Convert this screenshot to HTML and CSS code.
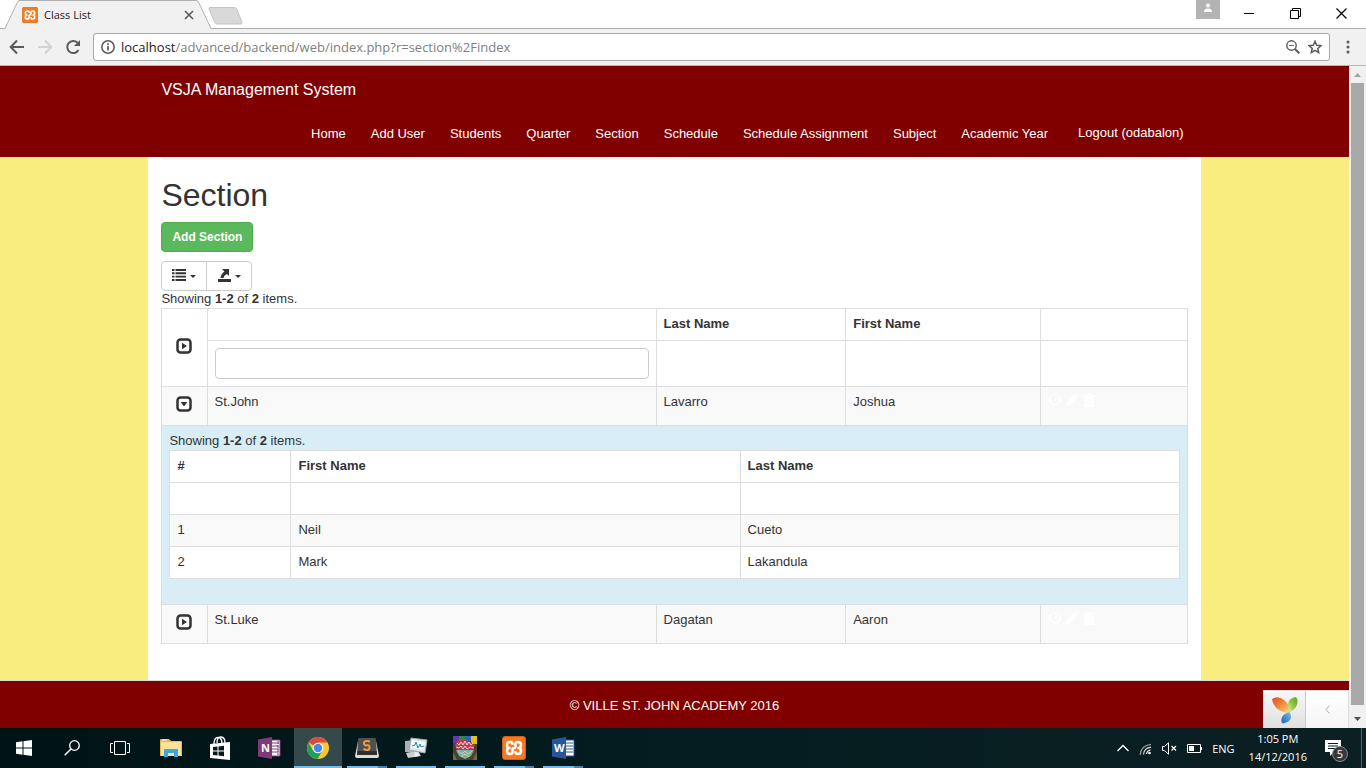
FILE: index.html
```html
<!DOCTYPE html>
<html lang="en">
<head>
<meta charset="utf-8">
<title>Class List</title>
<link rel="stylesheet" href="styles.css">
</head>
<body>
<svg class="defs" width="0" height="0" aria-hidden="true">
  <defs>
    <symbol id="xampp" viewBox="0 0 24 24">
      <rect x="0.500" y="0.500" width="23" height="23" rx="2.500" fill="#f57a20" stroke="#d2601a"/>
      <path d="M10.500 9V8Q10.500 6 8 6Q5 6 5 9Q5 12 7.500 12Q5 12 5 15Q5 18 8 18Q10.500 18 10.500 16V14Q10.500 12 12 12Q13.500 12 13.500 10V8Q13.500 6 16 6Q19 6 19 9Q19 12 16.500 12Q19 12 19 15Q19 18 16 18Q13.500 18 13.500 16V15" fill="none" stroke="#fff" stroke-width="2.500" stroke-linejoin="round"/>
    </symbol>
    <symbol id="expand" viewBox="0 0 16 16">
      <rect x="1.500" y="1.500" width="13" height="13" rx="3" fill="#fff" stroke="#333" stroke-width="2.500"/>
      <path d="M6 4.800L11 8L6 11.200Z" fill="#333"/>
    </symbol>
    <symbol id="collapse" viewBox="0 0 16 16">
      <rect x="1.500" y="1.500" width="13" height="13" rx="3" fill="#fff" stroke="#333" stroke-width="2.500"/>
      <path d="M4.600 6H11.400L8 10.500Z" fill="#333"/>
    </symbol>
    <symbol id="eye" viewBox="0 0 14 14">
      <path d="M0 7Q3 1.500 7 1.500T14 7Q11 12.500 7 12.500T0 7Z" fill="#fff"/>
      <circle cx="7" cy="6.500" r="3.300" fill="none" stroke="#f3f3f3"/>
      <path d="M5 6.500Q5 4.500 7 4.500" fill="none" stroke="#f3f3f3"/>
    </symbol>
    <symbol id="pencil" viewBox="0 0 14 14">
      <path d="M0.500 13.500L1.500 9.500L4.500 12.500ZM2 9L9 2L12 5L5 12ZM9.800 1.400L11.200 0L14 2.800L12.600 4.200Z" fill="#fff"/>
    </symbol>
    <symbol id="trash" viewBox="0 0 14 14">
      <path fill-rule="evenodd" d="M0.500 2H4.500V0.500H9.500V2H13.500V3.500H0.500ZM2 4H12V14H2ZM4.300 6V12H4.900V6ZM6.700 6V12H7.300V6ZM9.100 6V12H9.700V6Z" fill="#fff"/>
    </symbol>
  </defs>
</svg>

<header class="browser">
  <div class="titlebar">
    <div class="tab">
      <svg class="tab-shape" width="212" height="29" viewBox="0 0 212 29"><path d="M0 28.500H5L17.500 2Q18 0.500 20 0.500H196Q198 0.500 198.500 2L211 28.500H212V29H0Z" fill="#f1f1f1"/><path d="M0 28.500H5L17.500 2Q18 0.500 20 0.500H196Q198 0.500 198.500 2L211 28.500H212" fill="none" stroke="#b0b0b0"/></svg>
      <svg width="16" height="16"><use href="#xampp"/></svg>
      <span class="tab-title">Class List</span>
      <button class="icon-btn tab-close" aria-label="Close tab"><svg width="10" height="10" viewBox="0 0 10 10"><path d="M1 1L9 9M9 1L1 9" stroke="#5a5a5a" stroke-width="1.600"/></svg></button>
    </div>
    <button class="icon-btn new-tab" aria-label="New tab"><svg width="36" height="18" viewBox="0 0 36 18"><path d="M2 0.500H26Q28 0.500 29 2.500L34 15.500Q34.500 17 33 17H9Q7.500 17 6.500 15L1 2Q0.500 0.500 2 0.500Z" fill="#d9d9d9" stroke="#c4c4c4"/></svg></button>
    <div class="window-controls">
      <button class="icon-btn profile" aria-label="Profile"><svg width="10" height="10" viewBox="0 0 10 10"><circle cx="5" cy="2.500" r="2" fill="#fff"/><path d="M1 9V7.500Q2 5.500 5 5.500T9 7.500V9Z" fill="#fff"/></svg></button>
      <button class="icon-btn win" aria-label="Minimize"><svg width="10" height="10"><path d="M0 4.500H10" stroke="#000"/></svg></button>
      <button class="icon-btn win" aria-label="Restore"><svg width="11" height="11" viewBox="0 0 11 11"><path d="M0.500 2.500H8.500V10.500H0.500ZM2.500 2.500V0.500H10.500V8.500H8.500" fill="none" stroke="#000"/></svg></button>
      <button class="icon-btn win" aria-label="Close"><svg width="11" height="11" viewBox="0 0 11 11"><path d="M0.500 0.500L10.500 10.500M10.500 0.500L0.500 10.500" stroke="#000" stroke-width="1.200"/></svg></button>
    </div>
  </div>
  <div class="toolbar">
    <button class="icon-btn" aria-label="Back"><svg width="16" height="16" viewBox="0 0 16 16"><path d="M15 8H2.500M8 1.500L1.700 8L8 14.500" fill="none" stroke="#5a5a5a" stroke-width="2"/></svg></button>
    <button class="icon-btn" aria-label="Forward"><svg width="16" height="16" viewBox="0 0 16 16"><path d="M1 8H13.500M8 1.500L14.300 8L8 14.500" fill="none" stroke="#d2d2d2" stroke-width="2"/></svg></button>
    <button class="icon-btn" aria-label="Reload"><svg width="16" height="16" viewBox="0 0 16 16"><path d="M13.500 11A6 6 0 1 1 12.500 3.800" fill="none" stroke="#5a5a5a" stroke-width="2"/><path d="M15 1V7H9Z" fill="#5a5a5a"/></svg></button>
    <div class="address">
      <svg width="14" height="14" viewBox="0 0 14 14"><circle cx="7" cy="7" r="6.200" fill="none" stroke="#5a5a5a" stroke-width="1.500"/><path d="M7 6V10.500M7 3.300V5" stroke="#5a5a5a" stroke-width="1.700"/></svg>
      <span class="url"><b>localhost</b>/advanced/backend/web/index.php?r=section%2Findex</span>
      <button class="icon-btn zoom" aria-label="Zoom"><svg width="14" height="14" viewBox="0 0 14 14"><circle cx="5.500" cy="5.500" r="4.700" fill="none" stroke="#5a5a5a" stroke-width="1.400"/><path d="M3 5.500H8" stroke="#777" stroke-width="1.200"/><path d="M9 9L13.300 13.300" stroke="#5a5a5a" stroke-width="2"/></svg></button>
      <button class="icon-btn" aria-label="Bookmark"><svg width="14" height="14" viewBox="0 0 14 14"><path d="M7 1.300L8.700 5.200L13 5.600L9.800 8.400L10.700 12.600L7 10.400L3.300 12.600L4.200 8.400L1 5.600L5.300 5.200Z" fill="none" stroke="#5a5a5a" stroke-width="1.500"/></svg></button>
    </div>
    <button class="icon-btn menu" aria-label="Menu"><svg width="4" height="14" viewBox="0 0 4 14"><circle cx="2" cy="2" r="1.500" fill="#5a5a5a"/><circle cx="2" cy="7" r="1.500" fill="#5a5a5a"/><circle cx="2" cy="12" r="1.500" fill="#5a5a5a"/></svg></button>
  </div>
</header>

<div class="viewport">
  <div class="page">
    <nav class="navbar">
      <div class="navbar-inner">
        <a class="brand" href="#">VSJA Management System</a>
        <div class="nav-links">
          <a href="#">Home</a><a href="#">Add User</a><a href="#">Students</a><a href="#">Quarter</a><a href="#">Section</a><a href="#">Schedule</a><a href="#">Schedule Assignment</a><a href="#">Subject</a><a href="#">Academic Year</a>
          <button class="logout">Logout (odabalon)</button>
        </div>
      </div>
    </nav>
    <main class="container">
      <div class="breadcrumb"></div>
      <h1>Section</h1>
      <button class="btn-add">Add Section</button>
      <div class="btn-group">
        <button aria-label="Columns"><svg width="14" height="12" viewBox="0 0 14 12"><path d="M0 1H2.500M3.500 1H14M0 4.300H2.500M3.500 4.300H14M0 7.600H2.500M3.500 7.600H14M0 11H2.500M3.500 11H14" stroke="#333" stroke-width="1.900"/></svg><span class="caret"></span></button>
        <button aria-label="Export"><svg width="13" height="13" viewBox="0 0 13 13"><path d="M0 10H13V13H0ZM4 0H11V7L9 5Q6 6 5.500 9H2.500Q3 4.500 6.500 2.500Z" fill="#333"/></svg><span class="caret"></span></button>
      </div>
      <p class="summary">Showing <b>1-2</b> of <b>2</b> items.</p>
      <table class="grid sections">
        <colgroup><col class="c-toggle"><col class="c-name"><col class="c-last"><col class="c-first"><col class="c-actions"></colgroup>
        <thead>
          <tr><th class="toggle" rowspan="2"><button class="icon-btn" aria-label="Expand all"><svg width="16" height="16"><use href="#expand"/></svg></button></th><th></th><th>Last Name</th><th>First Name</th><th></th></tr>
          <tr class="filters"><td><input type="text" aria-label="Filter sections"></td><td></td><td></td><td></td></tr>
        </thead>
        <tbody>
          <tr class="row"><td class="toggle"><button class="icon-btn" aria-label="Collapse"><svg width="16" height="16"><use href="#collapse"/></svg></button></td><td>St.John</td><td>Lavarro</td><td>Joshua</td><td><div class="actions"><a href="#" aria-label="View"><svg width="14" height="14"><use href="#eye"/></svg></a><a href="#" aria-label="Update"><svg width="14" height="14"><use href="#pencil"/></svg></a><a href="#" aria-label="Delete"><svg width="14" height="14"><use href="#trash"/></svg></a></div></td></tr>
          <tr class="detail"><td colspan="5">
            <p class="summary">Showing <b>1-2</b> of <b>2</b> items.</p>
            <table class="grid students">
              <colgroup><col class="s-num"><col class="s-first"><col class="s-last"></colgroup>
              <thead>
                <tr><th>#</th><th>First Name</th><th>Last Name</th></tr>
                <tr><td>&nbsp;</td><td></td><td></td></tr>
              </thead>
              <tbody>
                <tr class="row-odd"><td>1</td><td>Neil</td><td>Cueto</td></tr>
                <tr><td>2</td><td>Mark</td><td>Lakandula</td></tr>
              </tbody>
            </table>
          </td></tr>
          <tr class="row"><td class="toggle"><button class="icon-btn" aria-label="Expand"><svg width="16" height="16"><use href="#expand"/></svg></button></td><td>St.Luke</td><td>Dagatan</td><td>Aaron</td><td><div class="actions"><a href="#" aria-label="View"><svg width="14" height="14"><use href="#eye"/></svg></a><a href="#" aria-label="Update"><svg width="14" height="14"><use href="#pencil"/></svg></a><a href="#" aria-label="Delete"><svg width="14" height="14"><use href="#trash"/></svg></a></div></td></tr>
        </tbody>
      </table>
    </main>
    <footer class="footer">© VILLE ST. JOHN ACADEMY 2016</footer>
    <div class="debug-bar">
      <a href="#" class="debug-logo" aria-label="Yii debugger"><svg width="28" height="30" viewBox="0 0 28 30">
        <defs>
          <linearGradient id="yo" x1="0" y1="0" x2="1" y2="1"><stop offset="0" stop-color="#dc4a2c"/><stop offset="0.500" stop-color="#f08c3c"/><stop offset="1" stop-color="#fde08a"/></linearGradient>
          <linearGradient id="yg" x1="1" y1="0" x2="0" y2="1"><stop offset="0" stop-color="#5ea32d"/><stop offset="0.500" stop-color="#8cc63f"/><stop offset="1" stop-color="#e8f0a0"/></linearGradient>
          <linearGradient id="yb" x1="1" y1="0" x2="0" y2="1"><stop offset="0" stop-color="#7fc4ea"/><stop offset="1" stop-color="#1d5fae"/></linearGradient>
        </defs>
        <path d="M1 4Q7 0 13 5Q19 10 20 17Q14 19 8 15Q2 11 1 4Z" fill="url(#yo)"/>
        <path d="M24 2Q17 4 17 9Q17 13 19 17Q27 13 26.500 6Q26 2 24 2Z" fill="url(#yg)"/>
        <path d="M18.500 17Q11 19 10.500 24Q10 28 12 28.500Q19 27 20 23Q20.500 20 18.500 17Z" fill="url(#yb)"/>
      </svg></a>
      <button class="debug-toggle" aria-label="Open debugger"><svg width="5" height="9" viewBox="0 0 5 9"><path d="M4.500 0.500L1 4.500L4.500 8.500" fill="none" stroke="#aaa"/></svg></button>
    </div>
  </div>
  <div class="scrollbar">
    <svg width="17" height="17" viewBox="0 0 17 17"><path d="M5 11L8.500 7L12 11Z" fill="#a3a3a3"/></svg>
    <div class="thumb"></div>
    <svg width="17" height="17" viewBox="0 0 17 17"><path d="M5 6L8.500 10L12 6Z" fill="#505050"/></svg>
  </div>
</div>

<div class="taskbar">
  <div class="launchers">
    <button class="sys" aria-label="Start"><svg width="16" height="16" viewBox="0 0 16 16"><path d="M0 2.200L6.500 1.300V7.500H0ZM7.500 1.200L16 0V7.500H7.500ZM0 8.500H6.500V14.700L0 13.800ZM7.500 8.500H16V16L7.500 14.800Z" fill="#fff"/></svg></button>
    <button class="sys" aria-label="Search"><svg width="16" height="16" viewBox="0 0 16 16"><circle cx="10.500" cy="5.500" r="4.800" fill="none" stroke="#fff" stroke-width="1.300"/><path d="M7 9L0.700 15.300" stroke="#fff" stroke-width="1.500"/></svg></button>
    <button class="sys" aria-label="Task view"><svg width="20" height="14" viewBox="0 0 20 14"><path d="M4.500 0.500H15.500V13.500H4.500ZM3 2.500H0.500V11.500H3M17 2.500H19.500V11.500H17" fill="none" stroke="#fff"/></svg></button>
    <button class="app" aria-label="File Explorer"><svg width="22" height="18" viewBox="0 0 22 18"><path d="M0 1Q0 0 1 0H9L11 2H21Q22 2 22 3V17H0Z" fill="#e9b949"/><path d="M1 3H21V17H1Z" fill="#fbe29a"/><path d="M4 18V11Q4 10 5 10H17Q18 10 18 11V18H14V14H8V18Z" fill="#3ba6e0"/><path d="M2 1H7" stroke="#fff"/></svg></button>
    <button class="app" aria-label="Store"><svg width="22" height="24" viewBox="0 0 22 24"><path d="M1 8L21 6V24L1 22Z" fill="#fff"/><path d="M5 8Q5 1.500 9 1.500T13 8M8 7Q8 0.800 12 1T16 7" fill="none" stroke="#fff" stroke-width="1.300"/><path d="M4 11L8.500 10.500V14.500H4ZM9.500 10.400L15 9.700V14.500H9.500ZM4 15.500H8.500V19.500L4 19ZM9.500 15.500H15V20.200L9.500 19.600Z" fill="#071a1e"/></svg></button>
    <button class="app" aria-label="OneNote"><svg width="23" height="22" viewBox="0 0 23 22"><path d="M11 3H22V19H11Z" fill="#fff" stroke="#80397b"/><path d="M14 6H21M14 9H21M14 12H21M14 15H21" stroke="#80397b"/><path d="M20 4V18" stroke="#80397b" stroke-dasharray="3 1"/><path d="M0 2.500L14 0V22L0 19.500Z" fill="#80397b"/><text x="3" y="15" class="office">N</text></svg></button>
    <button class="app active" aria-label="Chrome"><svg width="22" height="22" viewBox="0 0 22 22"><circle cx="11" cy="11" r="11" fill="#f8c932"/><path d="M11 11L1.500 5.500A11 11 0 0 1 20.500 5.500H11Z" fill="#dd4b3e"/><path d="M1.500 5.500A11 11 0 0 0 10.500 22L15.500 13.500L6 13.500Z" fill="#1fa15d"/><circle cx="11" cy="11" r="5.300" fill="#fff"/><circle cx="11" cy="11" r="4.200" fill="#4a85ee"/></svg></button>
    <button class="app running stacked" aria-label="Sublime Text"><svg width="24" height="22" viewBox="0 0 24 22"><path d="M3 4H21L24 19Q24 21 22 21H2Q0 21 0 19Z" fill="#ddd"/><path d="M4 1H20Q21 1 21 3L22 18H2L3 3Q3 1 4 1Z" fill="#505050"/><path d="M2.500 14H21.700L22 18H2Z" fill="#303030"/><path d="M15 4.500Q9 3 9 6T12 8.300T14.500 11T8.500 12" fill="none" stroke="#f59b3c" stroke-width="2"/></svg></button>
    <button class="app running" aria-label="Task monitor"><svg width="24" height="22" viewBox="0 0 24 22"><path d="M1 4L11 3V16L1 15Z" fill="#a9b3b5"/><path d="M2 16L14 14L17 19L4 21Z" fill="#c9d0d1"/><path d="M7 1L23 3L21 16L5 13Z" fill="#dfe5e6" stroke="#9da9ab"/><path d="M8 3L21 5L19.500 13L7 11Z" fill="#f5fbfd"/><path d="M8 9L11 8L12 5L14 11L16 7L17 10L20 9" fill="none" stroke="#2488b8"/><path d="M11 15L15 16V19L10 20Z" fill="#eee"/></svg></button>
    <button class="app running" aria-label="Game"><svg width="24" height="24" viewBox="0 0 24 24"><path d="M0 0H24V24H0Z" fill="#4c4030"/><path d="M0 0H6V7H0Z" fill="#6635b5"/><path d="M6 0H12V6H6Z" fill="#308c3d"/><path d="M12 0H18V5H12Z" fill="#315fd0"/><path d="M18 0H24V8H18Z" fill="#e0c315"/><path d="M2 9Q5 2 12 4T22 9L20 14H4Z" fill="#c33b4e"/><path d="M4 7L6 9L8 6L10 9L12 5L14 9L16 6L18 9L20 7M3 11L6 12L8 10L10 13L12 10L14 13L17 11L21 12" fill="none" stroke="#e8d8c5"/><path d="M3 14H21L18 20L12 23L6 20Z" fill="#7aaeb0"/><path d="M5 15L9 18L12 15L15 18L19 15M8 21L12 18L16 21" fill="none" stroke="#e3d27c"/><path d="M0 16L4 24H0ZM24 16L20 24H24Z" fill="#7b6740"/></svg></button>
    <button class="app running stacked" aria-label="XAMPP"><svg width="24" height="24"><use href="#xampp"/></svg></button>
    <button class="app running stacked" aria-label="Word"><svg width="23" height="22" viewBox="0 0 23 22"><path d="M11 3H22V19H11Z" fill="#fff" stroke="#2a5699"/><path d="M14 6H21M14 9H21M14 12H21M14 15H21" stroke="#2a5699"/><path d="M0 2.500L14 0V22L0 19.500Z" fill="#2a5699"/><text x="2" y="15" class="office">W</text></svg></button>
  </div>
  <div class="tray">
    <button class="icon-btn" aria-label="Show hidden icons"><svg width="12" height="8" viewBox="0 0 12 8"><path d="M0.500 7L6 1.500L11.500 7" fill="none" stroke="#fff" stroke-width="1.300"/></svg></button>
    <button class="icon-btn" aria-label="Network"><svg width="13" height="13" viewBox="0 0 13 13"><circle cx="10.500" cy="11" r="1.300" fill="#fff"/><path d="M7.500 12Q8 8.500 11.500 8" fill="none" stroke="#fff" stroke-width="1.200"/><path d="M4.500 12.500Q5 6 12 5.200" fill="none" stroke="#ddd" stroke-width="1.200"/><path d="M1.300 13Q1.500 3.500 12 2.300" fill="none" stroke="#999" stroke-width="1.200"/></svg></button>
    <button class="icon-btn" aria-label="Volume"><svg width="15" height="13" viewBox="0 0 15 13"><path d="M0.500 4.500H2.500L6.500 0.800V12.200L2.500 8.500H0.500Z" fill="none" stroke="#fff"/><path d="M9.500 4L14 8.500M14 4L9.500 8.500" stroke="#fff" stroke-width="1.200"/></svg></button>
    <button class="icon-btn" aria-label="Battery"><svg width="15" height="9" viewBox="0 0 15 9"><path d="M0.500 0.500H13.500V8.500H0.500Z" fill="none" stroke="#fff"/><path d="M2 2H7V7H2ZM13.500 3H15V6H13.500Z" fill="#fff"/></svg></button>
    <span class="lang">ENG</span>
    <span class="clock">1:05 PM<br>14/12/2016</span>
    <button class="icon-btn notices" aria-label="Notifications"><svg width="16" height="17" viewBox="0 0 16 17"><path d="M0 0H16V12H9L5 16V12H0Z" fill="#fff"/><path d="M3 3.500H13M3 6H13M3 8.500H13" stroke="#0b1f22"/></svg><span class="badge">5</span></button>
    <span class="peek"></span>
  </div>
</div>
</body>
</html>
```
FILE: styles.css
```css
* { box-sizing: border-box; }

body {
  margin: 0;
  height: 100vh;
  display: flex;
  flex-direction: column;
  overflow: hidden;
  font: 13px/17px "Liberation Sans", Arial, sans-serif;
  color: #333;
  background: #fff;
}

button { font: inherit; color: inherit; cursor: pointer; }
svg { display: block; flex: none; }
a { color: inherit; text-decoration: none; }
.defs { position: absolute; }

.icon-btn {
  display: flex;
  align-items: center;
  justify-content: center;
  padding: 0;
  border: 0;
  background: none;
}

/* Browser frame */
.browser { flex: none; font-family: "Open Sans", sans-serif; }
.titlebar {
  display: flex;
  height: 29px;
  border-bottom: 1px solid #b0b0b0;
}
.tab {
  position: relative;
  display: flex;
  align-items: center;
  gap: 6px;
  width: 208px;
  height: 29px;
  padding: 0 14px 0 22px;
}
.tab > * { position: relative; }
.tab .tab-shape { position: absolute; left: 0; top: 0; }
.tab-title { flex: 1; font-size: 11px; color: #222; }
.new-tab { height: 32px; }
.window-controls {
  display: flex;
  align-items: flex-start;
  margin-left: auto;
  padding-right: 2px;
}
.profile {
  width: 24px;
  height: 19px;
  margin-right: 6px;
  padding-bottom: 3px;
  background: #b3b3b3;
}
.win { width: 46px; height: 27px; }

.toolbar {
  display: flex;
  align-items: center;
  gap: 12px;
  height: 37px;
  padding: 0 16px 0 9px;
  background: #f1f1f1;
  border-bottom: 1px solid #b5b5b5;
}
.menu { margin-left: 4px; }
.address {
  flex: 1;
  display: flex;
  align-items: center;
  gap: 6px;
  height: 28px;
  padding: 0 7px;
  background: #fff;
  border: 1px solid #a8a8a8;
  border-radius: 3px;
}
.zoom { margin-right: 2px; }
.url { flex: 1; font-size: 13px; color: #808080; }
.url b { font-weight: 400; color: #222; }

/* Viewport */
.viewport { flex: 1; min-height: 0; display: flex; }
.page {
  position: relative;
  flex: 1;
  min-width: 0;
  display: flex;
  flex-direction: column;
  overflow: hidden;
  background: #f9ed80;
}
.scrollbar {
  width: 17px;
  display: flex;
  flex-direction: column;
  align-items: center;
  background: #f1f1f1;
}
.thumb { flex: 1; width: 13px; margin-bottom: 6px; background: #a8a8a8; }

.navbar { background: #800000; color: #fff; }
.navbar-inner {
  display: flex;
  flex-direction: column;
  width: 78%;
  margin: 0 auto;
  padding: 0 13px;
}
.brand { font-size: 16px; line-height: 48px; }
.nav-links {
  display: flex;
  justify-content: flex-end;
  gap: 25px;
  padding-right: 4px;
  line-height: 40px;
  height: 43px;
}
.logout { margin-left: 5px; padding: 0; border: 0; background: none; line-height: 38px; height: 38px; }

.container {
  flex: 1;
  width: 78%;
  margin: 0 auto;
  padding: 0 13px;
  background: #fff;
}
.breadcrumb { height: 3px; background: #f5f5f5; border-radius: 0 0 3px 3px; }
h1 { margin: 17px 0 9px; font-size: 32px; font-weight: 400; line-height: 36px; }
.btn-add {
  display: block;
  height: 30px;
  margin-bottom: 9px;
  padding: 0 10px;
  color: #fff;
  font-weight: 700;
  font-size: 12px;
  background: #5cb85c;
  border: 1px solid #4cae4c;
  border-radius: 4px;
}
.btn-group { display: flex; }
.btn-group button {
  display: flex;
  align-items: center;
  justify-content: center;
  gap: 4px;
  width: 46px;
  height: 30px;
  padding: 0 0 2px;
  background: #fff;
  border: 1px solid #ccc;
}
.btn-group button:first-child { border-radius: 4px 0 0 4px; }
.btn-group button:last-child { margin-left: -1px; border-radius: 0 4px 4px 0; }
.caret { margin-top: 2px; border: 3px solid transparent; border-top-color: #333; border-bottom: 0; }
.summary { margin: 0; padding-bottom: 2px; line-height: 15px; }

.grid {
  width: 100%;
  border-collapse: collapse;
  table-layout: fixed;
  background: #fff;
}
.grid th, .grid td {
  padding: 6px 7px 8px;
  border: 1px solid #ddd;
  text-align: left;
  vertical-align: top;
}
.grid .filters td, .grid .detail > td { padding: 7px; }
.grid .toggle { padding: 6px 7px 10px; vertical-align: middle; }
.toggle .icon-btn { margin: 0 auto; }
.detail .grid td { padding: 6px 7px 8px; }
.c-toggle { width: 4.4%; }
.c-name { width: 43.8%; }
.c-last { width: 18.5%; }
.c-first { width: 19%; }
.c-actions { width: 14.3%; }
.s-num { width: 12%; }
.s-first { width: 44.5%; }
.s-last { width: 43.5%; }
.grid input {
  display: block;
  width: 100%;
  height: 31px;
  padding: 5px 10px;
  font: inherit;
  border: 1px solid #ccc;
  border-radius: 4px;
}
.row { height: 39px; }
.row, .row-odd { background: #f9f9f9; }
.detail { background: #d9edf7; }
.students { margin-bottom: 18px; }
.actions { display: flex; gap: 3px; }

.footer {
  height: 48px;
  background: #800000;
  border-top: 1px solid #ddd;
  color: #fff;
  text-align: center;
  line-height: 50px;
}
.debug-bar {
  position: absolute;
  right: 0;
  bottom: 0;
  display: flex;
  width: 86px;
  height: 38px;
  border: 1px solid #ddd;
  border-bottom: 0;
  background: linear-gradient(#f7f7f7, #e0e0e0);
}
.debug-logo { flex: 1; display: flex; align-items: center; justify-content: center; }
.debug-toggle {
  display: flex;
  align-items: center;
  justify-content: center;
  width: 43px;
  border: 0;
  border-left: 1px solid #ccc;
  background: linear-gradient(#fff, #f5f5f5);
}

/* Taskbar */
.taskbar {
  flex: none;
  display: flex;
  justify-content: space-between;
  height: 40px;
  color: #fff;
  background: linear-gradient(90deg, #001316, #041d20 50%, #0c1f23);
  font-family: "Open Sans", sans-serif;
}
.launchers { display: flex; gap: 1px; }
.launchers button {
  display: flex;
  align-items: center;
  justify-content: center;
  width: 48px;
  padding: 0;
  border: 0;
  background: none;
}
.launchers .sys { margin-right: -1px; }
.launchers .sys + .app { margin-left: 3px; }
.launchers .active { background: #34494c; box-shadow: inset 0 -2px #76b9ed; }
.launchers .running {
  background: linear-gradient(#76b9ed, #76b9ed) center bottom / 40px 2px no-repeat;
}
.launchers .stacked {
  background-image: linear-gradient(90deg, #76b9ed 31px, #4f80a8 31px);
}
.office { font: 700 11px "Open Sans", sans-serif; fill: #fff; }
.tray { display: flex; align-items: center; gap: 10px; font-size: 11px; }
.lang { margin-right: 4px; }
.clock { text-align: center; line-height: 18px; }
.notices { position: relative; margin: 0 10px 0 8px; }
.badge {
  position: absolute;
  left: 7px;
  top: 6px;
  width: 16px;
  height: 16px;
  border: 1px solid #888;
  border-radius: 50%;
  background: #333a3c;
  font-size: 11px;
  line-height: 14px;
  text-align: center;
}
.peek { width: 5px; height: 40px; border-left: 1px solid #5a686a; }
```
